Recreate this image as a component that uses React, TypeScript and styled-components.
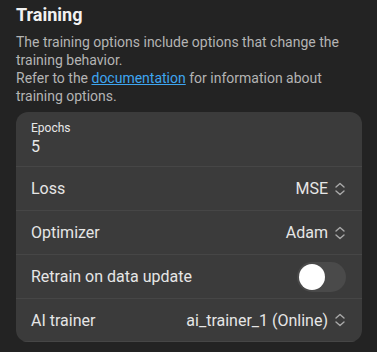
import React, { useState } from 'react';
import styled, { createGlobalStyle } from 'styled-components';

const GlobalStyle = createGlobalStyle`
    html, body {
        margin: 0;
        padding: 0;
        background: #232323;
    }
    body {
        font-family: Roboto, 'Noto Sans', sans-serif;
        color: #e3e3e3;
    }
`;

const Wrapper = styled.div`
    box-sizing: border-box;
    width: 377px;
    height: 352px;
    padding: 3px 15px 0 16px;
`;

const Title = styled.h2`
    margin: 0;
    font-size: 18px;
    font-weight: 700;
    line-height: 24px;
    color: #f1f1f1;
`;

const Description = styled.p`
    margin: 6px 0 0;
    font-size: 14px;
    line-height: 18px;
    color: #b4b4b4;
`;

const DocLink = styled.a`
    color: #3ea6f1;
    text-decoration: underline;
`;

const Card = styled.div`
    margin-top: 7px;
    background: #3b3b3b;
    border-radius: 12px;
    overflow: hidden;
`;

const Row = styled.div<{ $tall?: boolean }>`
    display: flex;
    align-items: center;
    justify-content: space-between;
    box-sizing: border-box;
    height: ${p => (p.$tall ? '55px' : '44px')};
    padding: 0 16px 0 15px;
    border-bottom: 1px solid #464646;

    &:last-child {
        height: 43px;
    }
`;

const Field = styled.div`
    display: flex;
    flex-direction: column;
    gap: 2px;
`;

const FieldLabel = styled.span`
    font-size: 12px;
    line-height: 14px;
    color: #e8e8e8;
`;

const FieldValue = styled.span`
    font-size: 16px;
    line-height: 20px;
    color: #e8e8e8;
`;

const Label = styled.span`
    font-size: 16px;
    color: #e6e6e6;
`;

const Select = styled.div`
    display: flex;
    align-items: center;
    gap: 6px;
    font-size: 16px;
    color: #e6e6e6;
`;

const Track = styled.button<{ $on: boolean }>`
    position: relative;
    width: 49px;
    height: 30px;
    border: none;
    padding: 0;
    border-radius: 15px;
    background: ${p => (p.$on ? '#3ea6f1' : '#4a4a4a')};
    cursor: pointer;
`;

const Knob = styled.span<{ $on: boolean }>`
    position: absolute;
    top: 2px;
    left: ${p => (p.$on ? '21px' : '2px')};
    width: 26px;
    height: 26px;
    border-radius: 50%;
    background: #fff;
`;

function UpDown() {
    return (
        <svg width="12" height="14" viewBox="0 0 12 14" fill="none" stroke="#a8a8a8" strokeWidth="1.4" strokeLinecap="round" strokeLinejoin="round">
            <path d="M2 5 L6 1.5 L10 5" />
            <path d="M2 9 L6 12.5 L10 9" />
        </svg>
    );
}

export default function App() {
    const [retrain, setRetrain] = useState(false);

    return (
        <Wrapper>
            <GlobalStyle />
            <Title>Training</Title>
            <Description>
                The training options include options that change the training behavior.
                <br />
                Refer to the <DocLink href="#">documentation</DocLink> for information about training options.
            </Description>
            <Card>
                <Row $tall>
                    <Field>
                        <FieldLabel>Epochs</FieldLabel>
                        <FieldValue>5</FieldValue>
                    </Field>
                </Row>
                <Row>
                    <Label>Loss</Label>
                    <Select>MSE <UpDown /></Select>
                </Row>
                <Row>
                    <Label>Optimizer</Label>
                    <Select>Adam <UpDown /></Select>
                </Row>
                <Row>
                    <Label>Retrain on data update</Label>
                    <Track $on={retrain} onClick={() => setRetrain(!retrain)}>
                        <Knob $on={retrain} />
                    </Track>
                </Row>
                <Row>
                    <Label>AI trainer</Label>
                    <Select>ai_trainer_1 (Online) <UpDown /></Select>
                </Row>
            </Card>
        </Wrapper>
    );
}
